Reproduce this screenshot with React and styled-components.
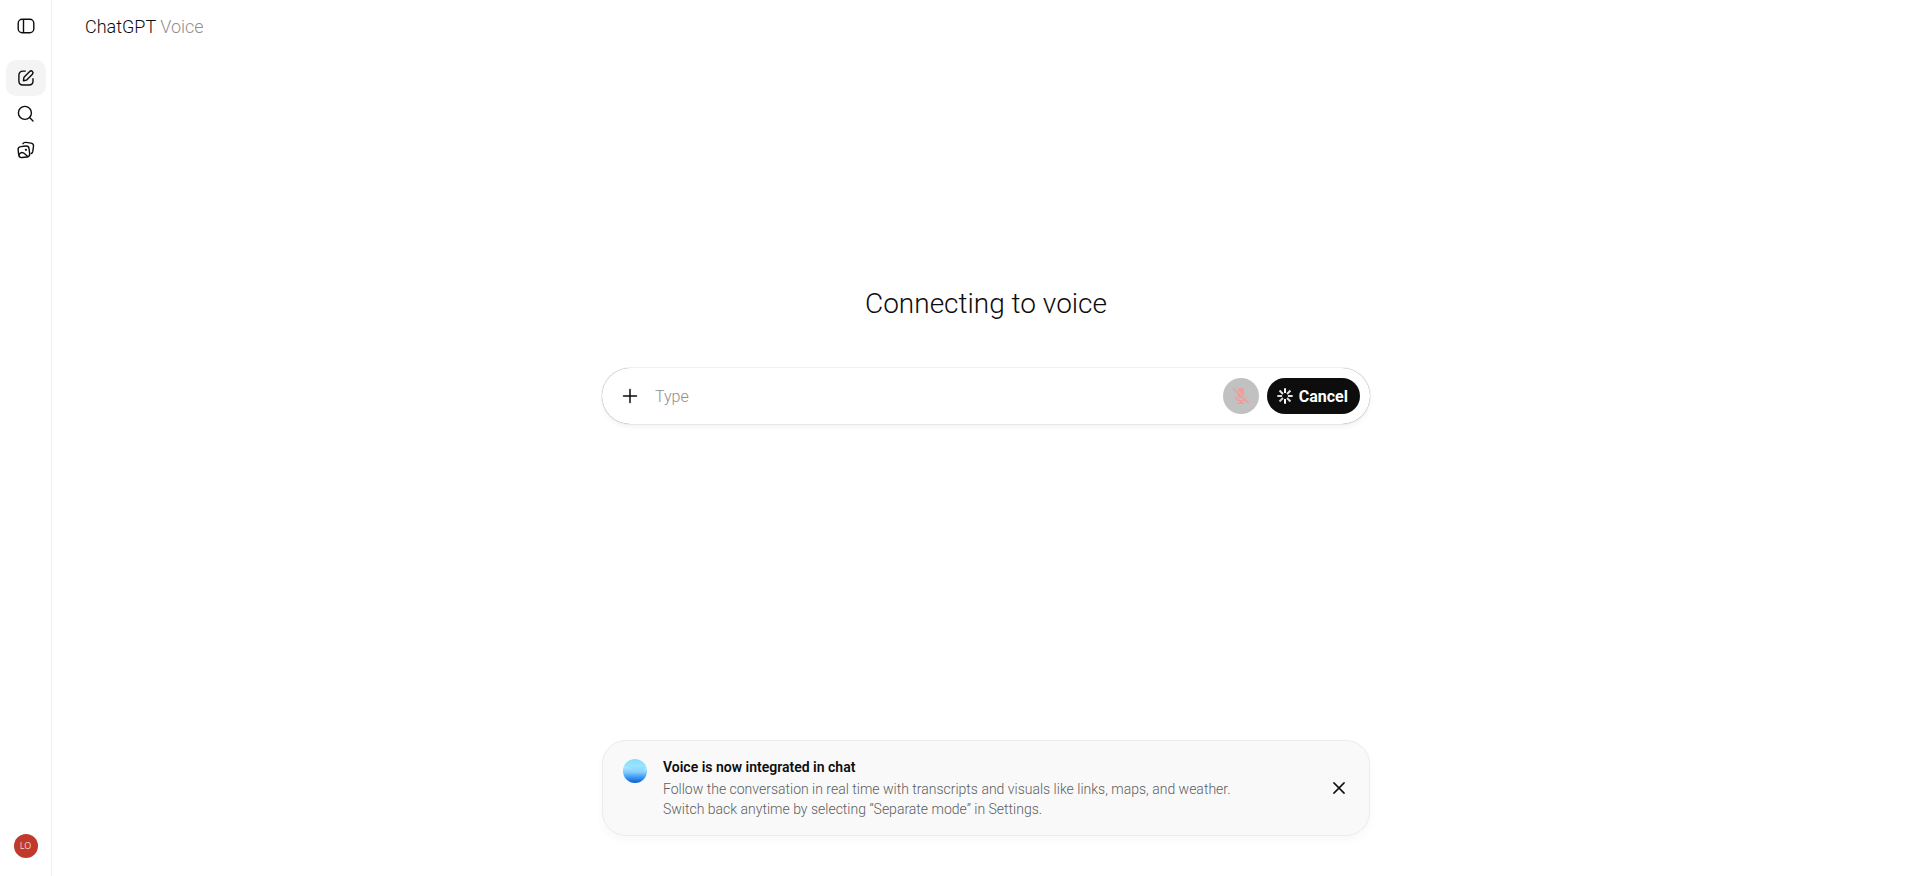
import React, { useState } from 'react'
import styled, { createGlobalStyle } from 'styled-components'

const PanelIcon = () => (
	<svg width="20" height="20" viewBox="0 0 20 20" fill="none" stroke="currentColor" strokeWidth="1.4" aria-hidden="true">
		<rect x="2.2" y="3.2" width="15.6" height="13.6" rx="4" />
		<path d="M7.5 3.4v13.2" />
	</svg>
)

const ComposeIcon = () => (
	<svg width="20" height="20" viewBox="0 0 20 20" fill="none" stroke="currentColor" strokeWidth="1.4" strokeLinecap="round" strokeLinejoin="round" aria-hidden="true">
		<path d="M9.3 3.1H7C4.5 3.1 2.9 4.6 2.9 7v6c0 2.5 1.6 4 4.1 4h6c2.5 0 4-1.5 4-4v-2.2" />
		<path d="M8.2 9l5.5-5.5a1.9 1.9 0 0 1 2.7 2.7l-5.5 5.500c-.3.3-.7.5-1.1.6l-2.4.4.4-2.500c.1-.5.1-.9.4-1.200z" />
	</svg>
)

const SearchIcon = () => (
	<svg width="20" height="20" viewBox="0 0 20 20" fill="none" stroke="currentColor" strokeWidth="1.4" strokeLinecap="round" aria-hidden="true">
		<circle cx="8.9" cy="8.9" r="6.5" />
		<path d="M13.6 13.6l3.4 3.4" />
	</svg>
)

const LibraryIcon = () => (
	<svg width="20" height="20" viewBox="0 0 20 20" fill="none" stroke="currentColor" strokeWidth="1.4" strokeLinecap="round" strokeLinejoin="round" aria-hidden="true">
		<rect x="2.4" y="6.3" width="11" height="11" rx="3" transform="rotate(-7 7.9 11.8)" />
		<path d="M7 3.7c.6-1.1 1.5-1.5 2.8-1.3l5.3.7c1.800.3 2.600 1.300 2.400 3.100l-.7 5.200c-.2 1.200-.7 1.800-1.500 2.100" />
		<path d="M3 14.600c1.200-2 2.800-2.600 4.400-1.700 1.500.8 3 2.600 4.300 3.700" />
		<circle cx="9.900" cy="9.800" r="1.100" fill="currentColor" stroke="none" />
	</svg>
)

const PlusIcon = () => (
	<svg width="20" height="20" viewBox="0 0 20 20" fill="none" stroke="currentColor" strokeWidth="1.5" strokeLinecap="round" aria-hidden="true">
		<path d="M10 3.5v13M3.5 10h13" />
	</svg>
)

const MutedIcon = () => (
	<svg width="20" height="20" viewBox="0 0 20 20" fill="none" stroke="currentColor" strokeWidth="1.3" strokeLinecap="round" aria-hidden="true">
		<rect x="6.9" y="1.9" width="6.2" height="10.2" rx="3.1" fill="currentColor" stroke="none" />
		<path d="M4.800 11.200c.7 2 2.700 3.400 5.200 3.400s4.500-1.400 5.200-3.400" />
		<path d="M10 14.800v2M7.900 17.200h4.200" strokeWidth="1.8" />
		<path d="M3.400 2l14.800 14" stroke="#c1c1c1" strokeWidth="1.5" strokeLinecap="butt" />
		<path d="M2.400 2.700l14.800 14" />
	</svg>
)

const spokes = [1, 0.9, 0.9, 0.85, 1, 0.8, 0.85, 0.9]

const SpinnerIcon = () => (
	<svg width="16" height="16" viewBox="0 0 16 16" stroke="currentColor" strokeWidth="2" aria-hidden="true">
		{spokes.map((opacity, i) => (
			<path key={i} d="M8 .3v4.800" opacity={opacity} transform={`rotate(${i * 45} 8 8)`} />
		))}
	</svg>
)

const CloseIcon = () => (
	<svg width="20" height="20" viewBox="0 0 20 20" fill="none" stroke="currentColor" strokeWidth="1.5" strokeLinecap="round" aria-hidden="true">
		<path d="M4.9 4.9l10.2 10.2M15.1 4.9L4.9 15.1" />
	</svg>
)

const OrbIcon = () => (
	<svg width="24" height="24" viewBox="0 0 24 24" aria-hidden="true">
		<defs>
			<linearGradient id="orb" x1="0.5" y1="0" x2="0.5" y2="1">
				<stop offset="0" stopColor="#84dcfe" />
				<stop offset="0.3" stopColor="#9ae4ff" />
				<stop offset="0.55" stopColor="#7fcdfd" />
				<stop offset="0.75" stopColor="#409cf3" />
				<stop offset="1" stopColor="#0a5fd0" />
			</linearGradient>
			<linearGradient id="haze" x1="0.4" y1="0" x2="0.2" y2="1">
				<stop offset="0" stopColor="#d4f2ff" stopOpacity="0.7" />
				<stop offset="1" stopColor="#5bb6fa" stopOpacity="0" />
			</linearGradient>
			<clipPath id="disc">
				<circle cx="12" cy="12" r="12" />
			</clipPath>
		</defs>
		<g clipPath="url(#disc)">
			<rect width="24" height="24" fill="url(#orb)" />
			<path d="M0 8c3-1 7 1 11 3 5 2 9 0 13-3v8H0z" fill="url(#haze)" />
		</g>
	</svg>
)

const links = [
	{ id: 0, name: 'New chat', icon: ComposeIcon, active: true },
	{ id: 1, name: 'Search chats', icon: SearchIcon, active: false },
	{ id: 2, name: 'Library', icon: LibraryIcon, active: false }
]

const App = () => {
	const [message, setMessage] = useState('')
	const [bannerOpen, setBannerOpen] = useState(true)

	return (
		<Layout>
			<GlobalStyle />
			<Sidebar>
				<Toggle type="button" aria-label="Open sidebar"><PanelIcon /></Toggle>
				<Nav aria-label="Chats">
					{links.map(({ id, name, icon: Icon, active }) => (
						<NavLink key={id} href="#" aria-label={name} $active={active}>
							<Icon />
						</NavLink>
					))}
				</Nav>
				<Avatar type="button" aria-label="Open profile menu">LO</Avatar>
			</Sidebar>
			<Main>
				<Header>
					<Model type="button">ChatGPT <span>Voice</span></Model>
				</Header>
				<Stage>
					<Title>Connecting to voice</Title>
					<Composer onSubmit={e => e.preventDefault()}>
						<AddButton type="button" aria-label="Add files"><PlusIcon /></AddButton>
						<Input
							aria-label="Message"
							placeholder="Type"
							value={message}
							onChange={e => setMessage(e.target.value)}
						/>
						<Actions>
							<MuteButton type="button" aria-label="Unmute microphone"><MutedIcon /></MuteButton>
							<CancelButton type="button"><SpinnerIcon />Cancel</CancelButton>
						</Actions>
					</Composer>
				</Stage>
				{bannerOpen && (
					<Banner>
						<Orb><OrbIcon /></Orb>
						<BannerText>
							<h2>Voice is now integrated in chat</h2>
							<p>
								Follow the conversation in real time with transcripts and visuals like links, maps, and weather.
								Switch back anytime by selecting “Separate mode” in Settings.
							</p>
						</BannerText>
						<CloseButton type="button" aria-label="Dismiss" onClick={() => setBannerOpen(false)}>
							<CloseIcon />
						</CloseButton>
					</Banner>
				)}
			</Main>
		</Layout>
	)
}

const GlobalStyle = createGlobalStyle`
	* {
		box-sizing: border-box;
	}
	body {
		margin: 0;
		background: #fff;
		color: #0d0d0d;
		font-family: Roboto, sans-serif;
		font-weight: 300;
	}
	button, input {
		font: inherit;
		color: inherit;
		padding: 0;
		border: none;
		background: none;
	}
	button {
		cursor: pointer;
	}
	svg {
		flex-shrink: 0;
	}
`

const Layout = styled.div`
	display: flex;
	min-height: 100vh;
`

const Sidebar = styled.aside`
	display: flex;
	flex-direction: column;
	align-items: center;
	width: 52px;
	padding: 8px 0 18px;
	border-right: 1px solid #f0f0f0;
`

const Toggle = styled.button`
	display: flex;
	align-items: center;
	justify-content: center;
	width: 36px;
	height: 36px;
	margin-bottom: 16px;
`

const Nav = styled.nav`
	display: flex;
	flex-direction: column;
`

const NavLink = styled.a`
	display: flex;
	align-items: center;
	justify-content: center;
	width: 40px;
	height: 36px;
	border-radius: 10px;
	color: inherit;
	background: ${({ $active }) => $active ? '#f4f4f4' : 'transparent'};
`

const Avatar = styled.button`
	width: 24px;
	height: 24px;
	margin-top: auto;
	border-radius: 50%;
	background: #c0392b;
	color: #f0d4d1;
	font-family: "Open Sans", sans-serif;
	font-size: 9px;
	font-weight: 400;
	line-height: 24px;
	text-align: center;
`

const Main = styled.main`
	flex: 1;
	display: flex;
	flex-direction: column;
	align-items: center;
	padding: 0 16px 40px;
`

const Header = styled.header`
	display: flex;
	align-items: center;
	align-self: stretch;
	height: 54px;
	padding-left: 17px;
`

const Model = styled.button`
	font-size: 18px;
	line-height: 28px;
	span {
		color: #8f8f8f;
	}
`

const Stage = styled.section`
	display: flex;
	flex-direction: column;
	align-items: center;
	width: 100%;
	max-width: 768px;
	padding: 233px 0 32px;
`

const Title = styled.h1`
	margin: 0 0 47px;
	font-size: 28px;
	font-weight: 300;
	line-height: 34px;
`

const Composer = styled.form`
	display: flex;
	align-items: center;
	width: 100%;
	height: 56px;
	padding: 0 10px;
	border-radius: 28px;
	background: #fff;
	box-shadow: 0 0 1px rgba(0, 0, 0, 0.62), 0 4px 4px rgba(0, 0, 0, 0.04);
`

const AddButton = styled.button`
	display: flex;
	align-items: center;
	justify-content: center;
	width: 36px;
	height: 36px;
`

const Input = styled.input`
	flex: 1;
	min-width: 0;
	height: 36px;
	margin-left: 7px;
	font-size: 16px;
	outline: none;
	&::placeholder {
		color: #8f8f8f;
		opacity: 1;
	}
`

const Actions = styled.div`
	display: flex;
	gap: 8px;
`

const MuteButton = styled.button`
	display: flex;
	align-items: center;
	justify-content: center;
	width: 36px;
	height: 36px;
	border-radius: 50%;
	background: #c1c1c1;
	color: #f49a97;
`

const CancelButton = styled.button`
	display: flex;
	align-items: center;
	gap: 6px;
	height: 36px;
	padding: 0 12px 0 10px;
	border-radius: 18px;
	background: #0d0d0d;
	color: #fff;
	font-size: 16px;
	font-weight: 700;
`

const Banner = styled.section`
	display: flex;
	align-items: flex-start;
	width: 100%;
	max-width: 768px;
	margin-top: auto;
	padding: 16px 20px;
	border: 1px solid #ececec;
	border-radius: 24px;
	background: #f9f9f9;
	box-shadow: 0 4px 8px rgba(0, 0, 0, 0.03);
`

const Orb = styled.div`
	display: flex;
	padding-top: 2px;
`

const BannerText = styled.div`
	flex: 1;
	max-width: 600px;
	margin-left: 16px;
	font-size: 14px;
	line-height: 20px;
	h2 {
		margin: 0 0 2px;
		font-size: 14px;
		font-weight: 600;
	}
	p {
		margin: 0;
		color: #5d5d5d;
	}
`

const CloseButton = styled.button`
	display: flex;
	align-items: center;
	justify-content: center;
	align-self: center;
	width: 20px;
	height: 20px;
	margin-left: auto;
`

export default App
